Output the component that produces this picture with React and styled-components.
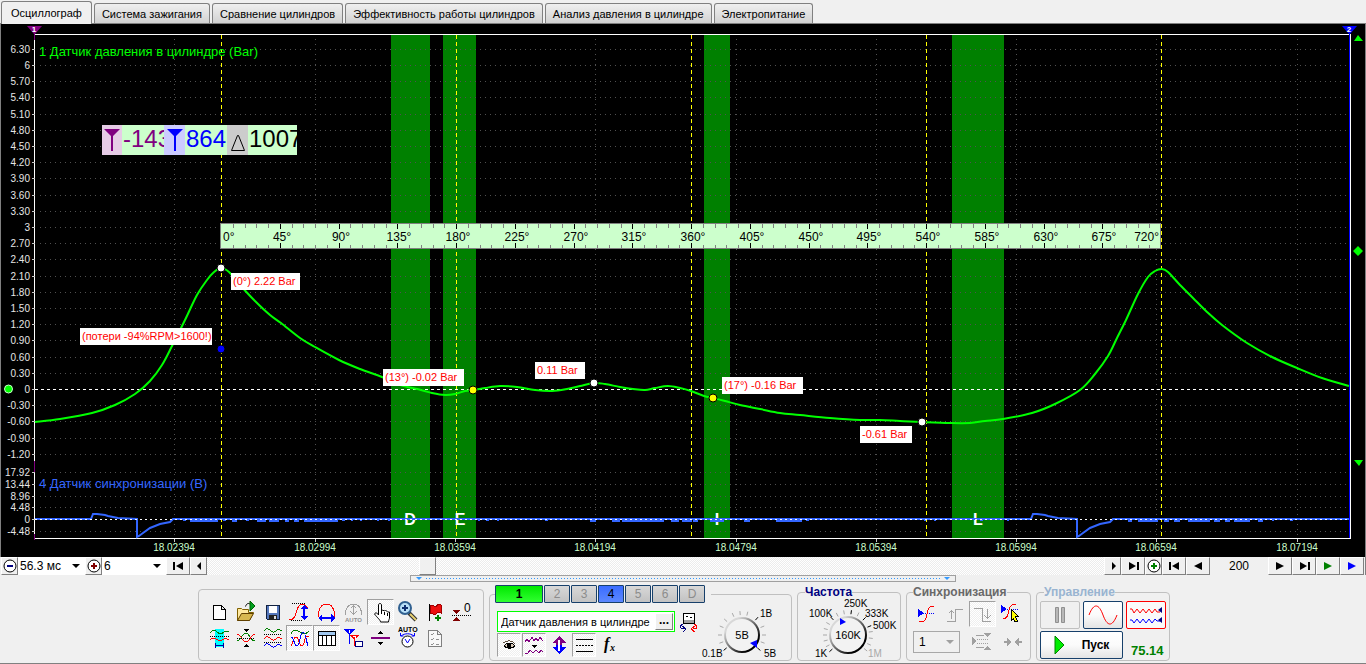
import React, { useState } from "react";
import styled, { createGlobalStyle } from "styled-components";

const GlobalStyle = createGlobalStyle`
  * {
    box-sizing: border-box;
  }
  body {
    margin: 0;
    background: #f0f0f0;
    color: #000;
    font-family: "Liberation Sans", Arial, sans-serif;
    font-size: 12px;
  }
  button, select, input {
    margin: 0;
    padding: 0;
    border-radius: 0;
    color: inherit;
    font: inherit;
  }
`

const Page = styled.div`
  display: flex;
  flex-direction: column;
`

const Tabs = styled.div`
  display: flex;
  align-items: flex-end;
  gap: 2px;
  height: 24px;
  padding-left: 1px;
  border-bottom: 1px solid #808080;
`
const Tab = styled.button`
  height: ${(p) => (p.$active ? 23 : 20)}px;
  margin-bottom: ${(p) => (p.$active ? -1 : 0)}px;
  padding: 0 7px;
  border: 1px solid #808080;
  border-bottom: 0;
  border-radius: 3px 3px 0 0;
  background: ${(p) => (p.$active ? "#f0f0f0" : "linear-gradient(#efefef, #e2e2e2 45%, #d2d2d2)")};
  font-size: 11px;
  white-space: nowrap;
  &:first-child {
    padding: 0 9px;
  }
`

const Scope = styled.div`
  position: relative;
  background: #000;
  border-left: 1px solid #808080;
  border-right: 1px solid #808080;
`
const Chart = styled.svg`
  display: block;
  width: 100%;
  height: auto;
`
const Readout = styled.div`
  position: absolute;
  left: 101px;
  top: 101px;
  display: grid;
  grid-template-columns: 20px 42px 21px 42px 21px 49px;
  height: 30px;
`
const ReadoutMark = styled.span`
  display: flex;
  align-items: center;
  justify-content: center;
  background: ${(p) => p.$bg};
`
const ReadoutValue = styled.output`
  overflow: hidden;
  padding-left: 1px;
  background: #ccffcc;
  color: ${(p) => p.$color};
  font-size: 24px;
  line-height: 28px;
  white-space: nowrap;
`

const ScrollRow = styled.div`
  display: flex;
  height: 18px;
  padding: 0 1px;
  border-right: 1px solid #808080;
`
const StepButton = styled.button`
  display: flex;
  flex: none;
  align-items: center;
  justify-content: center;
  width: ${(p) => p.$w || 24}px;
  height: 18px;
  border: 1px solid;
  border-color: #fff #808080 #808080 #fff;
  background: #f0f0f0;
`
const SelectBox = styled.label`
  display: grid;
  flex: none;
  align-items: center;
  width: ${(p) => p.$w}px;
  height: ${(p) => (p.$framed ? 22 : 18)}px;
  background: ${(p) => p.$bg || "#fff"};
  border: ${(p) => (p.$framed ? "1px solid #a8a8a8" : "0")};
  select {
    grid-area: 1 / 1;
    width: 100%;
    height: 100%;
    padding-left: ${(p) => (p.$framed ? 5 : 2)}px;
    border: 0;
    background: transparent;
    appearance: none;
  }
  svg {
    grid-area: 1 / 1;
    justify-self: end;
    margin-right: 5px;
    pointer-events: none;
  }
`
const Scroller = styled.input`
  flex: 1;
  min-width: 0;
  height: 18px;
  appearance: none;
  background: repeating-conic-gradient(#ececec 0 25%, #fff 0 50%) 0 0 / 2px 2px;
  &::-webkit-slider-thumb {
    appearance: none;
    width: 17px;
    height: 18px;
    border: 1px solid;
    border-color: #fff #808080 #808080 #fff;
    background: #f0f0f0;
  }
`
const StepValue = styled.output`
  flex: none;
  width: 58px;
  line-height: 18px;
  text-align: center;
`
const HandleRow = styled.div`
  display: flex;
  justify-content: center;
  height: 7px;
`
const Handle = styled.button`
  display: flex;
  align-items: center;
  gap: 4px;
  width: 40%;
  height: 7px;
  padding: 0 5px;
  border: 1px solid #a0a0a0;
  background: #f0f0f0;
  &::before, &::after {
    content: "";
    border: 3px solid transparent;
    border-top-color: #3399ff;
    border-bottom: 0;
  }
`
const HandleDots = styled.span`
  flex: 1;
  height: 1px;
  background: repeating-linear-gradient(90deg, #3399ff 0 1px, transparent 1px 3px);
`

const Controls = styled.div`
  display: flex;
  align-items: flex-end;
  justify-content: center;
  gap: 5px;
  height: 82px;
  padding: 0 0 2px 2px;
  border-bottom: 1px solid #808080;
`
const Group = styled.fieldset`
  flex: none;
  min-width: 0;
  width: ${(p) => p.$w}px;
  height: ${(p) => p.$h || 72}px;
  margin: 0;
  padding: ${(p) => p.$pad || "0"};
  border: 1px solid #c0c0c0;
  border-radius: 4px;
`
const Legend = styled.legend`
  margin-left: ${(p) => p.$left || 0}px;
  padding: 0;
  height: 14px;
  color: ${(p) => p.$color};
  font-size: 12px;
  font-weight: bold;
  line-height: 14px;
`
const ToolGrid = styled.div`
  display: flex;
  flex-wrap: wrap;
  width: 270px;
`
const ToolRow = styled.div`
  display: flex;
  align-items: center;
  gap: ${(p) => p.$gap || 0}px;
  margin-top: ${(p) => p.$top || 0}px;
`
const ToolButton = styled.button`
  display: flex;
  flex: none;
  align-items: center;
  justify-content: center;
  width: ${(p) => p.$w || 27}px;
  height: ${(p) => p.$h || 26}px;
  border: 1px solid;
  border-color: ${(p) => (p.$on ? "#a0a0a0 #fff #fff #a0a0a0" : "transparent")};
  background: ${(p) => (p.$on ? "repeating-conic-gradient(#efefef 0 25%, #fff 0 50%) 0 0 / 2px 2px" : "transparent")};
  svg {
    flex: none;
    shape-rendering: ${(p) => (p.$smooth ? "auto" : "crispEdges")};
  }
`
const ChannelLegend = styled.legend`
  display: flex;
  gap: 1px;
  height: 18px;
  margin-left: -2px;
  padding: 0 6px 0 0;
`
const ChannelButton = styled.button`
  width: ${(p) => (p.$wide ? 48 : 26)}px;
  height: 18px;
  border: 1px solid #17406b;
  border-radius: 1px;
  background: ${(p) => p.$bg || "linear-gradient(#d8d8d8, #c2c2c2)"};
  color: ${(p) => (p.$bg ? "#000" : "#8c8c8c")};
  font-weight: ${(p) => (p.$wide ? "bold" : "normal")};
`
const ChannelBody = styled.div`
  display: flex;
  justify-content: space-between;
`
const ChannelName = styled.div`
  display: flex;
  width: 178px;
  height: 21px;
  padding: 1px;
  border: 1px solid #00ff00;
  background: #fff;
  input {
    flex: 1;
    min-width: 0;
    padding-left: 2px;
    border: 0;
    background: transparent;
    font-size: 11px;
    outline: 0;
  }
`
const MoreButton = styled(StepButton)`
  width: 18px;
  height: 17px;
  padding-bottom: 4px;
  line-height: 10px;
  font-weight: bold;
`
const Knob = styled.svg`
  display: block;
  font-size: ${(p) => p.$size}px;
`
const FrameButton = styled.button`
  display: flex;
  align-items: center;
  justify-content: center;
  gap: 17px;
  width: ${(p) => p.$w || 40}px;
  height: 28px;
  border: 1px solid ${(p) => p.$color};
  border-radius: 2px;
  background: ${(p) => p.$bg || "linear-gradient(#fff, #fbfbfb 50%, #e4e4e4)"};
  font-weight: bold;
`
const Rate = styled.output`
  padding: 10px 0 0 8px;
  color: #008000;
  font-size: 13px;
  font-weight: bold;
`

const tabs = [
  "Осциллограф",
  "Система зажигания",
  "Сравнение цилиндров",
  "Эффективность работы цилиндров",
  "Анализ давления в цилиндре",
  "Электропитание",
]

const yOf = (bar) => Math.round(389 - bar * 54)
const pressureTicks = Array.from({ length: 26 }, (_, i) => (63 - i * 3) / 10)
const syncTicks = [["17.92", 472], ["13.44", 484], ["8.96", 496], ["4.48", 507], ["0", 519], ["-4.48", 531]]
const timeTicks = ["18.02394", "18.02994", "18.03594", "18.04194", "18.04794", "18.05394", "18.05994", "18.06594", "18.07194"]
const timeX = (i) => Math.round(174.3 + i * 140.3)
const bands = [
  { x: 391, w: 39, letter: "D", lx: 410 },
  { x: 443, w: 33, letter: "E", lx: 460 },
  { x: 704, w: 26, letter: "I", lx: 717 },
  { x: 952, w: 52, letter: "L", lx: 978 },
]
const strokes = [221, 456, 691, 926, 1161]
const pressure = [
  [35, 422], [60, 419], [92, 413], [115, 405], [135, 394], [150, 381], [162, 365], [172, 346], [185, 320],
  [197, 295], [207, 280], [214, 272], [221, 268], [229, 272], [240, 285], [255, 301], [270, 315], [281, 323],
  [300, 338], [315, 347], [339, 360], [360, 369], [382, 377], [400, 385], [421, 390], [432, 393], [445, 395],
  [455, 394], [465, 391], [473, 390], [485, 388], [500, 386], [517, 387], [535, 390], [552, 391], [567, 389],
  [580, 386], [594, 383], [605, 384], [620, 387], [633, 389], [645, 390], [655, 388], [668, 386], [680, 388],
  [691, 391], [704, 396], [713, 398], [725, 401], [740, 405], [760, 409], [780, 413], [800, 415], [830, 418],
  [860, 420], [880, 420], [900, 421], [922, 422], [950, 423], [970, 423], [985, 421], [1003, 419], [1032, 413],
  [1055, 404], [1080, 390], [1095, 374], [1108, 356], [1117, 338], [1126, 320], [1138, 294], [1148, 277],
  [1155, 271], [1162, 269], [1168, 272], [1180, 285], [1193, 298], [1207, 312], [1222, 325], [1247, 343],
  [1272, 357], [1297, 368], [1322, 378], [1349, 386],
]

// smooth line through all the samples
const curve = (pts) => {
  let d = `M${pts[0]}`
  for (let i = 0; i < pts.length - 1; i++) {
    const p0 = pts[i - 1] || pts[i]
    const p1 = pts[i]
    const p2 = pts[i + 1]
    const p3 = pts[i + 2] || p2
    d += `C${p1[0] + (p2[0] - p0[0]) / 6},${p1[1] + (p2[1] - p0[1]) / 6} ${p2[0] - (p3[0] - p1[0]) / 6},${p2[1] - (p3[1] - p1[1]) / 6} ${p2}`
  }
  return d
}

const pulse = (x) =>
  `H${x} l2,-5 h4 l8,1 l3,1 l10,2 l19,1 v18 l2,-1 l4,-3 l7,-5 l10,-4 l10,-2 l3,-3`
const noise = [
  [183, 3], [190, 28], [223, 3], [232, 5], [246, 3], [257, 9], [269, 10], [285, 4], [294, 5], [304, 34], [342, 3],
  [351, 2], [360, 2], [377, 2], [388, 2], [478, 2], [486, 3], [497, 2], [545, 3], [590, 6], [612, 8], [622, 42],
  [671, 8], [682, 10], [693, 5], [710, 14], [744, 6], [776, 26], [806, 3], [924, 2], [934, 2], [980, 3], [1007, 2],
  [1128, 4], [1138, 20], [1164, 5], [1174, 6], [1188, 22], [1214, 6], [1225, 5], [1234, 16], [1258, 5], [1272, 2], [1290, 3],
]
const notes = [
  { x: 231, y: 273, w: 69, text: "(0°) 2.22 Bar" },
  { x: 80, y: 328, w: 132, text: "(потери -94%RPM>1600!)" },
  { x: 383, y: 369, w: 81, text: "(13°) -0.02 Bar" },
  { x: 535, y: 362, w: 50, text: "0.11 Bar" },
  { x: 722, y: 377, w: 81, text: "(17°) -0.16 Bar" },
  { x: 860, y: 426, w: 52, text: "-0.61 Bar" },
]
const dots = [
  { x: 221, y: 268, fill: "#fff" },
  { x: 221, y: 349, fill: "#0000ff" },
  { x: 473, y: 390, fill: "#ffff00" },
  { x: 594, y: 383, fill: "#fff" },
  { x: 713, y: 398, fill: "#ffff00" },
  { x: 922, y: 422, fill: "#fff" },
]

const Oscillogram = () => (
  <Chart viewBox="1 24 1364 533" role="img" aria-label="Осциллограмма">
    <g shapeRendering="crispEdges">
      {bands.map((b) => <rect key={b.letter} x={b.x} y="35" width={b.w} height="503" fill="#008000" />)}
      <g stroke="#505050" strokeDasharray="1 4">
        {pressureTicks.map((v) => v !== 0 && <path key={v} d={`M40,${yOf(v) + 0.5}H1349`} />)}
        {syncTicks.map(([t, y]) => <path key={t} d={`M40,${y + 0.5}H1349`} />)}
        {timeTicks.map((t, i) => <path key={t} d={`M${timeX(i) + 0.5},39V538`} />)}
      </g>
      <path d="M35,389.5H1349" stroke="#fff" strokeDasharray="3 3" />
      {strokes.map((x) => <path key={x} d={`M${x + 0.5},35V538`} stroke="#ffff00" strokeDasharray="4 3" />)}
      <path d="M34,34.5H1350M34.5,34V538M34,538.5H1350M1350.5,34V539" stroke="#fff" />
      <path d="M34.5,461V472M34.5,534V540" stroke="#800080" />
      <path d="M1349.5,34V538" stroke="#0000ff" />
      <path
        d={[...pressureTicks.map(yOf), ...syncTicks.map((t) => t[1])].map((y) => `M32,${y + 0.5}h3`).join("")
          + timeTicks.map((t, i) => `M${timeX(i) + 0.5},539v3`).join("")}
        stroke="#c8c8c8"
      />
    </g>
    <g fill="#fff" fontSize="16" fontWeight="bold" textAnchor="middle">
      {bands.map((b) => <text key={b.letter} x={b.lx} y="525">{b.letter}</text>)}
    </g>

    <path d={curve(pressure)} fill="none" stroke="#00ff00" strokeWidth="2" />
    <path d={`M35,519${pulse(91)} ${pulse(1031)} H1349`} fill="none" stroke="#3366ff" strokeWidth="2" />
    <g shapeRendering="crispEdges">
      {noise.map(([x, w]) => <rect key={x} x={x} y="518" width={w} height={w > 3 ? 4 : 3} fill="#3366ff" />)}
      <path d="M35,519.5H1349" stroke="#fff" strokeDasharray="2 3" />
    </g>

    <g fontSize="10">
      <g fill="#e6e6e6" textAnchor="end">
        {pressureTicks.map((v) => <text key={v} x="30" y={yOf(v) + 4}>{Number.isInteger(v) ? v : v.toFixed(2)}</text>)}
        {syncTicks.map(([t, y]) => <text key={t} x="30" y={y + 4}>{t}</text>)}
      </g>
      <g fill="#ccffcc" textAnchor="middle">
        {timeTicks.map((t, i) => <text key={t} x={timeX(i)} y="551">{t}</text>)}
      </g>
    </g>
    <g fontSize="13">
      <text x="39" y="56" fill="#00ff00">1 Датчик давления в цилиндре (Bar)</text>
      <text x="39" y="488" fill="#3366ff">4 Датчик синхронизации (В)</text>
    </g>

    <g shapeRendering="crispEdges">
      <rect x="220.5" y="223.5" width="940" height="25" fill="#ccffcc" stroke="#808080" />
      {Array.from({ length: 79 }, (_, i) => {
        const x = Math.round(221 + (i + 1) * 11.75) + 0.5
        const major = (i + 1) % 5 === 0
        return <path key={i} d={`M${x},224v${major ? 5 : 4}M${x},248v${major ? -5 : -3}`} stroke={major ? "#000" : "#808080"} />
      })}
    </g>
    <g fontSize="12" textAnchor="middle">
      <text x="223" y="241" textAnchor="start">0°</text>
      {Array.from({ length: 15 }, (_, i) => (
        <text key={i} x={Math.round(223 + (i + 1) * 58.75)} y="241">{(i + 1) * 45}°</text>
      ))}
      <text x="1159" y="241" textAnchor="end">720°</text>
    </g>

    {notes.map((n) => (
      <g key={n.text}>
        <rect x={n.x} y={n.y} width={n.w} height="17" fill="#fff" />
        <text x={n.x + 2} y={n.y + 12} fontSize="11" fill="#ff0000">{n.text}</text>
      </g>
    ))}
    {dots.map((d) => <circle key={d.x + d.fill} cx={d.x} cy={d.y} r="4" fill={d.fill} stroke="#000" strokeWidth="1" />)}

    <circle cx="8.5" cy="389" r="4" fill="#00ff00" stroke="#ccffcc" />
    <path d="M27,26h15l-7,8v6h-1v-6z" fill="#800080" />
    <path d="M1342,26h15l-7,8h-1z" fill="#0000ff" />
    <g fill="#fff" fontSize="8" fontWeight="bold" textAnchor="middle">
      <text x="34" y="32">1</text>
      <text x="1349" y="32">2</text>
    </g>
    <path d="M1354,41l4,-6l5,6zM1358,246l5,5l-5,5l-5,-5zM1354,460h9l-4,6z" fill="#00ff00" />
  </Chart>
)

const Caret = ({ color = "#000" }) => (
  <svg width="8" height="4"><path d="M0,0h8l-4,4z" fill={color} /></svg>
)
const Arrow = ({ d, color = "#000" }) => (
  <svg width="12" height="10"><path d={d} fill={color} /></svg>
)
const right = "M2,1v8l8,-4z"
const left = "M10,1v8l-8,-4z"
const toEnd = "M2,1v8l7,-4zM10,1h2v8h-2z"
const toStart = "M11,1v8l-7,-4zM1,1h2v8h-2z"

const Zoom = ({ plus, color }) => (
  <svg width="14" height="14" viewBox="0 0 14 14">
    <circle cx="7" cy="7" r="6" fill="#fff" stroke="#000" />
    <path d={plus ? "M4,7h6M7,4v6" : "M4,7h6"} stroke={color} strokeWidth="2" />
  </svg>
)

// toolbar drawings share one 24x24 grid
const Icon = ({ children, w = 24, h = 24 }) => (
  <svg width={w} height={h} viewBox={`0 0 ${w} ${h}`} fill="none" stroke="#000">{children}</svg>
)

const icons = {
  "Новый": (
    <Icon><path d="M6.500,5.500h8l4,4v10h-12zM14.500,5.500v4h4" fill="#fff" /></Icon>
  ),
  "Открыть": (
    <Icon>
      <path d="M3.500,20.500v-12h4l1,1h6v3h5l-4,8z" fill="#ffe9a0" stroke="#806000" />
      <path d="M3.500,20.500l4,-7h12l-4,7z" fill="#d8b850" stroke="#604000" />
      <path d="M11.500,6.500c1,-3 3,-4 5,-2" />
      <path d="M16,1v10l5,-5z" fill="#00a020" stroke="#006000" />
    </Icon>
  ),
  "Сохранить": (
    <Icon>
      <path d="M5.500,5.500h13v14h-12l-1,-1z" fill="#5577bb" stroke="#102040" />
      <path d="M8,6h8v7h-8z" fill="#fff" stroke="none" />
      <path d="M8,15h8v5h-8z" fill="#222" stroke="none" />
      <path d="M13,16h2v3h-2z" fill="#ddd" stroke="none" />
    </Icon>
  ),
  "Развернуть по вертикали": (
    <Icon>
      <path d="M4,3.500h14M3,20.500h11" strokeDasharray="1 1" />
      <path d="M1,20c6,0 6,-5 8,-10c1,-4 4,-7 8,-5l3,3" stroke="#ff0000" />
      <path d="M16,8v9" stroke="#0000ff" strokeWidth="2" />
      <path d="M12,9l4,-4l4,4zM12,16l4,4l4,-4z" fill="#0000ff" stroke="none" />
    </Icon>
  ),
  "Развернуть по горизонтали": (
    <Icon>
      <path d="M3.500,17v-4c1,-6 4,-9 8,-9s7,3 8,9v4" stroke="#ff0000" />
      <path d="M6,18h11" stroke="#0000ff" strokeWidth="2" />
      <path d="M7,14v8l-4,-4zM16,14v8l4,-4z" fill="#0000ff" stroke="none" />
    </Icon>
  ),
  "Автомасштаб": (
    <Icon>
      <path d="M3.500,15v-3c1,-5 4,-8 8,-8s7,3 8,8v3M11.500,6v8M8.500,8.500l3,-3l3,3M8.500,11.500l3,3l3,-3" stroke="#a0a0a0" />
      <text x="3" y="22" fill="#909090" stroke="none" fontSize="6" fontWeight="bold">AUTO</text>
    </Icon>
  ),
  "Рука": (
    <Icon>
      <path d="M9.500,15v-10c0,-2 3,-2 3,0v6l1,-1l2,1l1,-1l2,2l2,0v6c0,1 -1,2 -1,4h-8c0,-2 -3,-4 -6,-8c1,-2 3,-1 4,1z" fill="#fff" />
      <path d="M12.500,11v3M15.500,12v3M18.500,13v3" />
    </Icon>
  ),
  "Лупа": (
    <Icon>
      <path d="M13,13l7,7" stroke="#303030" strokeWidth="4" />
      <path d="M14,14l6,6" stroke="#e8d070" strokeWidth="2" />
      <circle cx="9" cy="8" r="6" fill="#b8e0f8" stroke="#306090" strokeWidth="2" />
      <path d="M6,8h6M9,5v6" stroke="#103070" strokeWidth="2" />
    </Icon>
  ),
  "Маркер": (
    <Icon>
      <path d="M6.500,4v17" />
      <path d="M7.500,5.500h3l1,1h2l1,-2h3l1,1v8l-1,-1h-3l-2,2h-2l-1,-1h-2z" fill="#ee1010" stroke="#a00000" />
      <path d="M12,18h6M15,15v6" stroke="#008000" strokeWidth="2" />
    </Icon>
  ),
  "Ноль": (
    <Icon>
      <path d="M3,10h7l-3.500,4zM3,21h7l-3.500,-4z" fill="#800000" stroke="none" />
      <path d="M2,15.500h19" strokeDasharray="1 1" />
      <text x="14" y="12" fill="#000" stroke="none" fontSize="12">0</text>
    </Icon>
  ),
  "Область": (
    <Icon>
      <path d="M8,3h9v18h-9z" fill="#00ffff" stroke="none" />
      <path d="M3,7c3,-4 5,-3 7,-1s5,2 7,0s3,-1 5,0" stroke="#008000" />
      <path d="M3,10.500h19" strokeDasharray="1 1" />
      <path d="M3,14c3,-3 5,-2 8,0s4,0 6,-1s3,0 5,1" stroke="#ff0000" />
      <path d="M8,19.500h9M8.500,17v5M16.500,17v5" stroke="#0000a0" />
    </Icon>
  ),
  "Наложение": (
    <Icon>
      <path d="M9,3h6l-3,3zM9,21h6l-3,-3z" fill="#000" stroke="none" />
      <path d="M3,15c4,0 5,-8 9,-8s4,8 9,8" stroke="#008000" />
      <path d="M3,8c4,0 5,8 9,8s5,-8 9,-8" stroke="#ff0000" />
      <path d="M3,12.500h18" strokeDasharray="1 1" />
    </Icon>
  ),
  "Раздельно": (
    <Icon>
      <path d="M3,5c3,-4 5,-2 7,0s5,1 6,-1s3,0 5,1" stroke="#008000" />
      <path d="M3,13c3,-4 5,-2 7,0s5,1 6,-1s3,0 5,1" stroke="#ff0000" />
      <path d="M3,20c3,-4 5,-2 7,0s5,1 6,-1s3,0 5,1" stroke="#0000ff" />
      <path d="M3,8.500h18M3,16.500h18" strokeDasharray="1 1" />
    </Icon>
  ),
  "Вместе": (
    <Icon>
      <path d="M3,8c3,-6 6,-4 9,-2s5,3 9,-1" stroke="#008000" />
      <path d="M3,20c2,-2 2,-9 5,-9s3,9 6,9s2,-13 7,-9" stroke="#ff0000" />
      <path d="M3,11c3,0 3,9 6,9s3,-14 6,-14s3,9 5,14" stroke="#0000ff" />
    </Icon>
  ),
  "Таблица": (
    <Icon>
      <rect x="3.500" y="5.500" width="17" height="14" fill="#fff" />
      <path d="M4,6h16v3h-16z" fill="#a0c8f0" stroke="none" />
      <path d="M3,9.500h18M7.500,9v10M11.500,9v10M16.500,9v10" />
    </Icon>
  ),
  "Линейки": (
    <Icon>
      <path d="M2,3h11l-5,6v9h-1v-9z" fill="#0000ff" stroke="none" />
      <path d="M8,9h9l-4,5v6h-1v-6z" fill="#ff0000" stroke="none" />
      <path d="M7.500,4v3M11,10.500h2v2" stroke="#fff" />
      <rect x="13.500" y="15.500" width="7" height="5" fill="#fff" stroke="#000080" />
    </Icon>
  ),
  "Разделитель": (
    <Icon>
      <path d="M9,8h5l-2.500,-3zM9,16h5l-2.500,3z" fill="#000" stroke="none" />
      <path d="M2,12h19" stroke="#800080" strokeWidth="2" />
    </Icon>
  ),
  "Авторегулятор": (
    <Icon>
      <text x="2" y="6" fill="#000" stroke="none" fontSize="7" fontWeight="bold">AUTO</text>
      <path d="M5,10c4,-3 9,-3 13,0M4.500,7v3h3M18.500,7v3h-3" stroke="#0000ff" />
      <circle cx="11.500" cy="15.500" r="5.500" fill="#fff" />
      <path d="M9,13l2.500,4l2.500,-4" stroke="#0000ff" />
    </Icon>
  ),
  "Список": (
    <Icon>
      <path d="M5.500,4.500h9l4,4v12h-13zM14.500,4.500v4h4" fill="#f8f8f8" stroke="#808080" />
      <path d="M8,8l1,1l2,-2M8,13l1,1l2,-2M8,18l1,1l2,-2M13,13.500h3M13,18.500h3" stroke="#909090" />
    </Icon>
  ),
}

const channelIcons = [
  ["Видимость", true, (
    <Icon w={22} h={20} key="i">
      <path d="M6,11c3,-4 8,-4 11,0c-3,3 -8,3 -11,0z" fill="#d8c8b8" />
      <path d="M5,8c4,-3 9,-3 12,1" stroke="#605040" />
      <circle cx="11" cy="11" r="2" fill="#000" />
    </Icon>
  )],
  ["Фильтр", true, (
    <Icon w={22} h={20} key="i">
      <path d="M2,7l2,-3l2,3l3,-5l2,4l2,-3l2,3l2,-4l3,4" stroke="#800080" />
      <path d="M8,10h6l-3,3z" fill="#000" stroke="none" />
      <path d="M2,18h3l2,-3l3,3l3,-3l3,3l2,-3l2,2" stroke="#800080" />
    </Icon>
  )],
  ["Сдвиг", false, (
    <Icon w={22} h={20} key="i">
      <path d="M4,8l7,-7l7,7h-4v2h-6v-2z" fill="#800080" stroke="none" />
      <path d="M4,12l7,7l7,-7h-4v-2h-6v2z" fill="#0000ff" stroke="none" />
      <path d="M11,5v11" stroke="#fff" strokeWidth="2" />
    </Icon>
  )],
  ["Уровни", true, (
    <Icon w={22} h={20} key="i">
      <path d="M3,4.500h17M3,16.500h17" />
      <path d="M3,10.500h17" strokeDasharray="2 1" />
    </Icon>
  )],
]

const Dial = ({ cx, cy, r, ticks, dark }) => (
  <g>
    {ticks.map((a) => {
      const x = Math.cos((a * Math.PI) / 180)
      const y = Math.sin((a * Math.PI) / 180)
      return (
        <path
          key={a}
          d={`M${cx + x * (r + 3)},${cy + y * (r + 3)}L${cx + x * (r + 7)},${cy + y * (r + 7)}`}
          stroke={dark.includes(a) ? "#000" : "#a8a8a8"}
        />
      )
    })}
    <circle cx={cx} cy={cy} r={r} fill="#f2f2f2" stroke="url(#rim)" strokeWidth="2" />
  </g>
)

const App = () => {
  const [tab, setTab] = useState(0)
  const [position, setPosition] = useState(241)
  const [name, setName] = useState("Датчик давления в цилиндре")

  return (
    <Page>
      <GlobalStyle />
      <Tabs role="tablist">
        {tabs.map((t, i) => (
          <Tab key={t} role="tab" aria-selected={i === tab} $active={i === tab} onClick={() => setTab(i)}>{t}</Tab>
        ))}
      </Tabs>

      <Scope>
        <Oscillogram />
        <Readout>
          <ReadoutMark $bg="#e6cce6">
            <svg width="16" height="24"><path d="M0,1h16l-7,7v15h-2v-15z" fill="#800080" /></svg>
          </ReadoutMark>
          <ReadoutValue $color="#800080">-143</ReadoutValue>
          <ReadoutMark $bg="#ccccff">
            <svg width="16" height="24"><path d="M0,1h16l-7,7v15h-2v-15z" fill="#0000ff" /></svg>
          </ReadoutMark>
          <ReadoutValue $color="#0000ff">864</ReadoutValue>
          <ReadoutMark $bg="#cccccc">
            <svg width="16" height="24"><path d="M1.500,22.500h13l-6,-15h-1z" fill="none" stroke="#000" /></svg>
          </ReadoutMark>
          <ReadoutValue $color="#000">1007</ReadoutValue>
        </Readout>
      </Scope>

      <ScrollRow>
        <StepButton $w={17} aria-label="Уменьшить"><Zoom color="#000080" /></StepButton>
        <SelectBox $w={67}>
          <select aria-label="Развёртка"><option>56.3 мс</option></select>
          <Caret />
        </SelectBox>
        <StepButton $w={17} aria-label="Увеличить"><Zoom plus color="#800000" /></StepButton>
        <SelectBox $w={64}>
          <select aria-label="Масштаб"><option>6</option></select>
          <Caret />
        </SelectBox>
        <StepButton aria-label="В начало"><Arrow d={toStart} /></StepButton>
        <StepButton $w={17} aria-label="Влево"><Arrow d="M8,1v8l-4,-4z" /></StepButton>
        <Scroller
          type="range"
          min="0"
          max="1000"
          aria-label="Прокрутка"
          value={position}
          onChange={(e) => setPosition(Number(e.target.value))}
        />
        <StepButton $w={17} aria-label="Вправо"><Arrow d="M5,1v8l4,-4z" /></StepButton>
        <StepButton aria-label="В конец"><Arrow d={toEnd} /></StepButton>
        <StepButton $w={17} aria-label="Добавить метку"><Zoom plus color="#008000" /></StepButton>
        <StepButton aria-label="Первый цикл"><Arrow d={toStart} /></StepButton>
        <StepButton aria-label="Предыдущий цикл"><Arrow d={left} /></StepButton>
        <StepValue>200</StepValue>
        <StepButton aria-label="Следующий цикл"><Arrow d={right} /></StepButton>
        <StepButton aria-label="Последний цикл"><Arrow d={toEnd} /></StepButton>
        <StepButton aria-label="Воспроизвести"><Arrow d={right} color="#008000" /></StepButton>
        <StepButton aria-label="Просмотр"><Arrow d={right} color="#0000ff" /></StepButton>
      </ScrollRow>
      <HandleRow><Handle aria-label="Свернуть панель"><HandleDots /></Handle></HandleRow>

      <Controls>
        <Group $w={286} $pad="9px 6px">
          <ToolGrid>
            {Object.keys(icons).map((k) => (
              <ToolButton
                key={k}
                aria-label={k}
                $on={["Рука", "Вместе", "Таблица"].includes(k)}
                $smooth={["Лупа", "Рука", "Открыть", "Авторегулятор"].includes(k)}
              >
                {icons[k]}
              </ToolButton>
            ))}
          </ToolGrid>
        </Group>

        <Group $w={303} $h={76} $pad="6px 7px 0">
          <ChannelLegend>
            <ChannelButton $wide $bg="linear-gradient(#00e800, #30ff30)">1</ChannelButton>
            <ChannelButton>2</ChannelButton>
            <ChannelButton>3</ChannelButton>
            <ChannelButton $bg="linear-gradient(#3a6cff, #5c88ff)">4</ChannelButton>
            <ChannelButton>5</ChannelButton>
            <ChannelButton>6</ChannelButton>
            <ChannelButton>D</ChannelButton>
          </ChannelLegend>
          <ChannelBody>
            <div>
              <ToolRow $top={2} $gap={4}>
                <ChannelName>
                  <input aria-label="Датчик" value={name} onChange={(e) => setName(e.target.value)} />
                  <MoreButton aria-label="Выбрать датчик">...</MoreButton>
                </ChannelName>
                <ToolButton $w={20} $h={21} aria-label="Прибор">
                  <Icon w={20} h={20}>
                    <path d="M4.500,1.500h11v10h-11z" fill="#fff" />
                    <path d="M5,8h10v3h-10z" fill="#a0a0a0" stroke="none" />
                    <path d="M7,4.500h2M11,5.500h2" />
                    <path d="M4,12c-4,2 -3,5 1,5M3,14l4,3l-3,3" stroke="#000080" />
                    <path d="M15,12c4,2 4,5 -1,5M16,14l-4,3l4,3" stroke="#ff0000" />
                  </Icon>
                </ToolButton>
              </ToolRow>
              <ToolRow $top={1} $gap={1}>
                {channelIcons.map(([label, on, icon]) => (
                  <ToolButton key={label} $w={24} $h={24} aria-label={label} $on={on}>{icon}</ToolButton>
                ))}
                <ToolButton $w={24} $h={24} aria-label="Функция">
                  <Icon w={16} h={18}>
                    <text x="3" y="13" fill="#000" stroke="none" fontSize="16" fontStyle="italic" fontWeight="bold" fontFamily="Liberation Serif, serif">f</text>
                    <text x="9" y="15" fill="#000" stroke="none" fontSize="10" fontStyle="italic" fontWeight="bold" fontFamily="Liberation Serif, serif">x</text>
                  </Icon>
                </ToolButton>
              </ToolRow>
            </div>
            <Knob width="84" height="51" viewBox="701 609 84 51" $size={10}>
              <defs>
                <linearGradient id="rim" x1="0" y1="0" x2="1" y2="1">
                  <stop offset="0.2" stopColor="#d8d8d8" />
                  <stop offset="0.8" stopColor="#000" />
                </linearGradient>
              </defs>
              <Dial cx={743} cy={635} r={17} dark={[-48, 40, 140]} ticks={[140, 160, 180, 202, 222, 246, 265, 284, -48, -22, 0, 20, 40]} />
              <path d="M758,640v8l-7,-5z" fill="#0000ff" />
              <text x="743" y="639" textAnchor="middle" fontSize="11">5В</text>
              <text x="761" y="617">1В</text>
              <text x="765" y="657">5В</text>
              <text x="703" y="657">0.1В</text>
            </Knob>
          </ChannelBody>
        </Group>

        <Group $w={104} $h={76}>
          <Legend $color="#000080" $left={7}>Частота</Legend>
          <Knob width="102" height="61" viewBox="798 599 102 61" $size={10}>
            <Dial
              cx={848}
              cy={635}
              r={18}
              dark={[226, 278, -45, -22, 138]}
              ticks={[138, 152, 166, 180, 195, 210, 226, 242, 260, 278, 296, -45, -22, -8, 8, 24, 40]}
            />
            <path d="M840,618v7l6,-3z" fill="#0000ff" />
            <text x="848" y="639" textAnchor="middle" fontSize="11">160K</text>
            <text x="844" y="607">250K</text>
            <text x="809" y="617">100K</text>
            <text x="865" y="617">333K</text>
            <text x="873" y="629">500K</text>
            <text x="815" y="657">1K</text>
            <text x="868" y="657" fill="#a8a8a8">1M</text>
          </Knob>
        </Group>

        <Group $w={125} $h={76} $pad="2px 6px 0">
          <Legend $color="#696969">Синхронизация</Legend>
          <ToolRow $gap={1}>
            <ToolButton aria-label="Уровень">
              <Icon>
                <path d="M3,7v8l6,-4z" fill="#0000ff" stroke="none" />
                <path d="M8,11.500h12" stroke="#0000ff" strokeDasharray="1 1" />
                <path d="M4,19c5,2 7,0 8,-7s3,-8 7,-8" stroke="#ff0000" />
              </Icon>
            </ToolButton>
            <ToolButton aria-label="Фронт">
              <Icon><path d="M4,19.500h8.500v-12h7M8.500,17v-8M5.500,11.500l3,-3l3,3" stroke="#a0a0a0" /></Icon>
            </ToolButton>
            <ToolButton aria-label="Спад" $on>
              <Icon><path d="M3,6.500h8.500v13h8M16.500,7v9M13.500,13.500l3,3l3,-3" stroke="#a0a0a0" /></Icon>
            </ToolButton>
            <ToolButton aria-label="Выбор уровня">
              <Icon>
                <path d="M2,3v8l6,-4z" fill="#0000ff" stroke="none" />
                <path d="M8,7.500h12" stroke="#0000ff" strokeDasharray="1 1" />
                <path d="M4,17c4,0 5,-4 6,-9s4,-6 7,-6" stroke="#ff0000" />
                <path d="M12.500,7.500l7,7h-3l2,5h-3l-1,-3l-2,2z" fill="#ffff00" />
              </Icon>
            </ToolButton>
          </ToolRow>
          <ToolRow $top={4} $gap={10}>
            <SelectBox $w={47} $bg="#f0f0f0" $framed>
              <select aria-label="Канал"><option>1</option></select>
              <Caret color="#a0a0a0" />
            </SelectBox>
            <ToolButton $w={22} $h={22} aria-label="Диапазон">
              <Icon w={20} h={20}>
                <path d="M1,5v8l5,-4zM13,1h7l-3.500,4zM13,18h7l-3.500,-4z" fill="#a0a0a0" stroke="none" />
                <path d="M5,3.500h8M5,15.500h8" stroke="#a0a0a0" />
                <path d="M6,7.500h12M6,11.500h12" stroke="#a0a0a0" strokeDasharray="1 1" />
              </Icon>
            </ToolButton>
            <ToolButton $w={22} $h={22} aria-label="Сжать">
              <Icon w={20} h={20}>
                <path d="M4,6v8l5,-4zM16,6v8l-5,-4z" fill="#a0a0a0" stroke="none" />
                <path d="M1,10h5M14,10h5" stroke="#a0a0a0" strokeWidth="2" />
              </Icon>
            </ToolButton>
          </ToolRow>
        </Group>

        <Group $w={134} $h={76} $pad="2px 3px 0">
          <Legend $color="#99b4d1" $left={4}>Управление</Legend>
          <ToolRow $gap={3}>
            <FrameButton $color="#c0c0c0" $bg="#f0f0f0" aria-label="Пауза">
              <svg width="12" height="16"><path d="M1.500,0.500h3v15h-3zM7.500,0.500h3v15h-3z" fill="#b8b8b8" stroke="#909090" /></svg>
            </FrameButton>
            <FrameButton $color="#17406b" aria-label="Сигнал">
              <svg width="30" height="22"><path d="M1,11c5,-13 10,-11 14,0s9,13 14,0" fill="none" stroke="#ff0000" /></svg>
            </FrameButton>
            <FrameButton $color="#ff0000" $bg="#fafafa" aria-label="Поток">
              <svg width="34" height="20" fill="none">
                <path d="M1,4h2l2,4l3,-4l3,4l3,-4l3,4l3,-4l3,4l3,-4l2,3h3" stroke="#ff0000" />
                <path d="M1,15h2l2,3l3,-4l3,4l3,-4l3,4l3,-4l3,4l3,-4l2,2h3" stroke="#0000ff" />
                <path d="M33,2v6l-4,-3zM33,12v6l-4,-3z" fill="#000080" />
              </svg>
            </FrameButton>
          </ToolRow>
          <ToolRow $top={2}>
            <FrameButton $w={83} $color="#17406b">
              <svg width="11" height="18"><path d="M1,0v18l9,-9z" fill="#00ee00" stroke="#008000" /></svg>
              Пуск
            </FrameButton>
            <Rate>75.14</Rate>
          </ToolRow>
        </Group>
      </Controls>
    </Page>
  )
}

export default App
